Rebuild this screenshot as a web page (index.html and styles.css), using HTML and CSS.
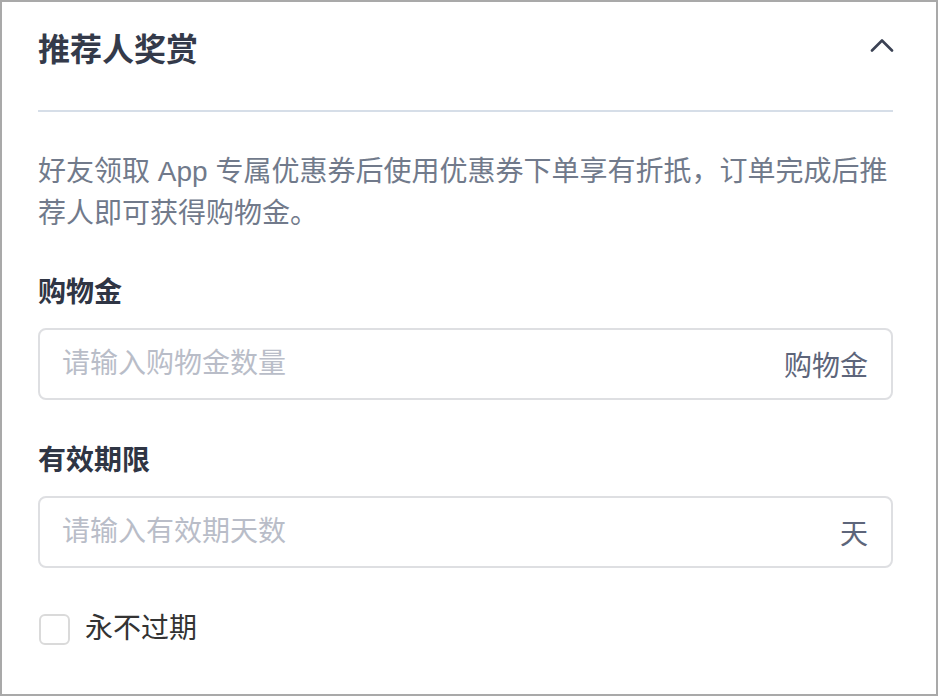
FILE: index.html
```html
<!DOCTYPE html>
<html lang="zh-CN">
<head>
	<meta charset="UTF-8">
	<meta name="viewport" content="width=device-width, initial-scale=1.0">
	<title>推荐人奖赏</title>

	<link rel="stylesheet" href="styles.css">

</head>
<body>

	<section class="reward-panel">
		<header class="reward-header">
			<h1 class="reward-title">推荐人奖赏</h1>
			<button type="button" class="reward-toggle" aria-label="收起">
				<svg width="24" height="14" viewBox="0 0 24 14">
					<polyline points="2,12.5 12,2.5 22,12.5" fill="none" stroke="currentColor" stroke-width="2.6" stroke-linecap="round" stroke-linejoin="round" />
				</svg>
			</button>
		</header>

		<p class="reward-desc">好友领取 App 专属优惠券后使用优惠券下单享有折扺，订单完成后推荐人即可获得购物金。</p>

		<div class="reward-field">
			<label for="reward_amount" class="reward-label">购物金</label>
			<div class="reward-input">
				<input type="text" id="reward_amount" name="reward_amount" placeholder="请输入购物金数量" />
				<span class="reward-suffix">购物金</span>
			</div>
		</div>

		<div class="reward-field">
			<label for="reward_days" class="reward-label">有效期限</label>
			<div class="reward-input">
				<input type="text" id="reward_days" name="reward_days" placeholder="请输入有效期天数" />
				<span class="reward-suffix">天</span>
			</div>
		</div>

		<label for="reward_forever" class="reward-check">
			<input type="checkbox" id="reward_forever" name="reward_forever" />
			<span>永不过期</span>
		</label>
	</section>

</body>
</html>
```

FILE: styles.css
```css
* {
	box-sizing: border-box;
}
html, body {
	margin: 0;
	padding: 0;
	background-color: #ffffff;
}
body {
	font-family: "Liberation Sans", "Noto Sans CJK SC", sans-serif;
}
.reward-panel {
	width: 938px;
	height: 696px;
	padding: 0 43px 0 36px;
	border: 2px solid #a9a9a9;
	background-color: #ffffff;
}
.reward-header {
	display: flex;
	align-items: center;
	justify-content: space-between;
	padding: 24px 0 36px;
	border-bottom: 2px solid #d6dee8;
}
.reward-title {
	margin: 0;
	font-size: 32px;
	line-height: 48px;
	font-weight: 700;
	color: #343a4a;
}
.reward-toggle {
	display: flex;
	margin: 0 -1px 11px 0;
	padding: 0;
	border: none;
	background: none;
	color: #3b4254;
}
.reward-desc {
	margin: 39px 0 0;
	font-size: 28px;
	line-height: 42px;
	color: #717a8b;
}
.reward-field {
	margin-top: 37px;
}
.reward-field + .reward-field {
	margin-top: 40px;
}
.reward-label {
	display: block;
	font-size: 28px;
	line-height: 42px;
	font-weight: 700;
	color: #2f3544;
}
.reward-input {
	display: flex;
	align-items: center;
	height: 72px;
	margin-top: 14px;
	padding: 0 23px 0 22px;
	border: 2px solid #dedfe2;
	border-radius: 8px;
}
.reward-input input {
	flex: 1;
	min-width: 0;
	padding: 0;
	border: none;
	outline: none;
	font-family: inherit;
	font-size: 28px;
	color: #333a48;
	background: transparent;
}
.reward-input input::placeholder {
	color: #b9bdc8;
}
.reward-suffix {
	font-size: 28px;
	color: #5d657a;
}
.reward-check {
	display: flex;
	align-items: center;
	gap: 15px;
	margin-top: 40px;
	font-size: 28px;
	line-height: 42px;
	color: #333333;
}
.reward-check input {
	appearance: none;
	width: 31px;
	height: 31px;
	margin: 0 0 0 1px;
	border: 2px solid #dadada;
	border-radius: 6px;
	background: #ffffff;
}
```
